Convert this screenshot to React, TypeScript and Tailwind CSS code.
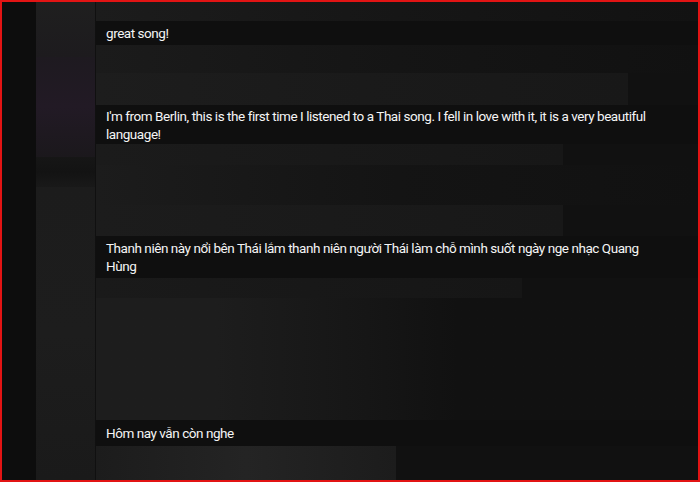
const comments = [
  'great song!',
  "I'm from Berlin, this is the first time I listened to a Thai song. I fell in love with it, it is a very beautiful language!",
  'Thanh niên này nổi bên Thái lắm thanh niên người Thái làm chỗ mình suốt ngày nge nhạc Quang Hùng',
  'Hôm nay vẫn còn nghe',
]

function CommentBar({ text, className }: { text: string; className: string }) {
  return (
    <div className={'flex items-center bg-[#0f0f0f] pl-[10px] ' + className}>
      <p className="w-[548px] text-[13.5px] leading-[18px] tracking-[-0.45px] text-[#f5f5f5]">
        {text}
      </p>
    </div>
  )
}

export default function App() {
  return (
    <div
      className="flex h-[482px] w-[700px] overflow-hidden border-2 border-[#e21414] bg-[#111111]"
      style={{ fontFamily: 'Roboto, "Noto Sans", sans-serif' }}
    >
      {/* left gutter */}
      <div className="w-[34px] shrink-0 bg-[#0d0d0d]" />

      {/* blurred avatar column */}
      <div className="flex w-[59px] shrink-0 flex-col bg-[#1b1b1b]">
        <div className="h-[55px] bg-gradient-to-b from-[#1f1f1f] to-[#1d1b1e]" />
        <div className="h-[100px] bg-gradient-to-b from-[#1e1a20] via-[#221a25] to-[#1b181c]" />
        <div className="h-[30px] bg-gradient-to-b from-[#161616] via-[#131313] to-[#191919]" />
        <div className="flex-1 bg-gradient-to-b from-[#1c1c1c] via-[#1d1d1d] to-[#1a1a1a]" />
      </div>

      <div className="w-px shrink-0 bg-[#101010]" />

      {/* comment column */}
      <div className="flex flex-1 flex-col">
        <div className="h-[19px] bg-gradient-to-r from-[#1c1c1c] via-[#161616] to-[#121212]" />
        <CommentBar text={comments[0]} className="h-[24px]" />

        <div className="flex h-[60px] flex-col">
          <div className="h-[28px] bg-gradient-to-r from-[#1b1b1b] via-[#151515] to-[#111111]" />
          <div className="h-[32px] w-[532px] bg-gradient-to-r from-[#1d1d1d] via-[#1a1a1a] to-[#181818]" />
        </div>
        <CommentBar text={comments[1]} className="h-[39px]" />

        <div className="flex h-[92px] flex-col">
          <div className="h-[21px] w-[467px] bg-gradient-to-r from-[#1b1b1b] to-[#171717]" />
          <div className="h-[40px] bg-gradient-to-r from-[#1c1c1c] via-[#141414] to-[#111111]" />
          <div className="h-[31px] w-[467px] bg-gradient-to-r from-[#1c1c1c] to-[#181818]" />
        </div>
        <CommentBar text={comments[2]} className="h-[42px]" />

        <div className="flex h-[142px] flex-col">
          <div className="h-[20px] w-[426px] bg-gradient-to-r from-[#1a1a1a] to-[#161616]" />
          <div className="flex-1 bg-gradient-to-r from-[#1d1d1d] from-[20%] via-[#161616] via-[45%] to-[#111111] to-[60%]" />
        </div>
        <CommentBar text={comments[3]} className="h-[26px]" />

        <div className="h-[34px] w-[300px] bg-gradient-to-r from-[#1c1c1c] via-[#242424] to-[#1c1c1c]" />
      </div>
    </div>
  )
}
